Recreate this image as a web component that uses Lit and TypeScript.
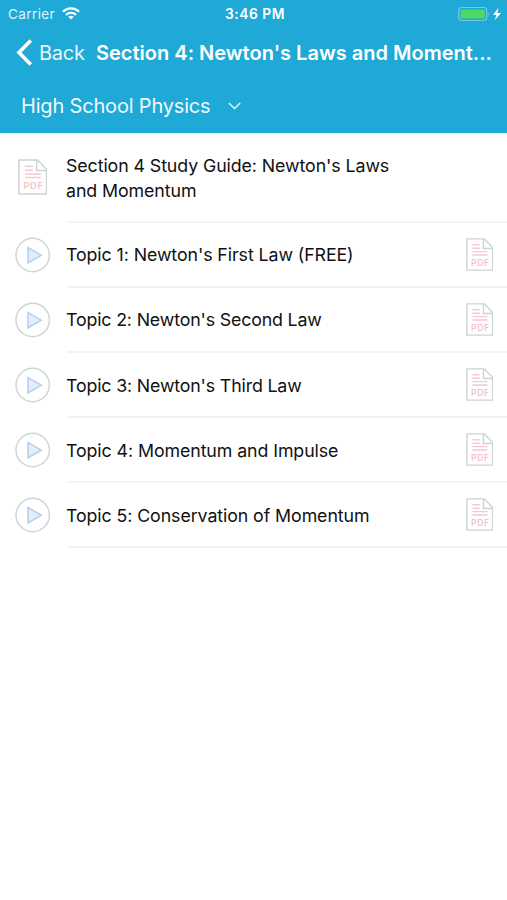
import { LitElement, html, css, svg, nothing } from "lit";
import { customElement, property } from "lit/decorators.js";

interface Lesson {
  title: string;
  kind: "guide" | "video";
  tight?: boolean;
}

const LESSONS: Lesson[] = [
  { title: "Section 4 Study Guide: Newton's Laws and Momentum", kind: "guide" },
  { title: "Topic 1: Newton's First Law (FREE)", kind: "video" },
  { title: "Topic 2: Newton's Second Law", kind: "video", tight: true },
  { title: "Topic 3: Newton's Third Law", kind: "video", tight: true },
  { title: "Topic 4: Momentum and Impulse", kind: "video" },
  { title: "Topic 5: Conservation of Momentum", kind: "video" },
];

@customElement("pdf-icon")
export class PdfIcon extends LitElement {
  @property({ type: Number }) width = 29.5;
  @property({ type: Number }) height = 36;

  static styles = css`
    :host { display: block; flex: none; }
    svg { display: block; }
    text { font: 600 9.500px Inter, sans-serif; }
  `;

  render() {
    return html`<svg width=${this.width} height=${this.height} viewBox="0 0 30 36" preserveAspectRatio="none" fill="none">
      ${svg`
        <path d="M1 1H20L29 10.500V35H1Z" stroke="#ccd3d2" stroke-width="1.500"/>
        <path d="M19 1.500V11.500H28.500" stroke="#ccd3d2" stroke-width="1.500"/>
        <path d="M7 7.300H15M7 11.200H15M7 14.900H23.500M7 18.600H23.500" stroke="#f5c9cd" stroke-width="1.500"/>
        <text x="5.500" y="30.200" fill="#f1c3c9" textLength="19.800">PDF</text>
      `}
    </svg>`;
  }
}

@customElement("lesson-row")
export class LessonRow extends LitElement {
  @property({ attribute: false }) lesson!: Lesson;

  static styles = css`
    :host { display: block; color: #111; }
    .row { display: flex; height: 65.150px; }
    .row.guide { height: 90px; }
    .lead { width: 66px; flex: none; display: flex; align-items: center; padding: 0 0 1px 15px; box-sizing: border-box; }
    .guide .lead { padding-left: 17.500px; padding-bottom: 1px; }
    .body {
      flex: 1; display: flex; align-items: center; justify-content: space-between;
      border-bottom: 2px solid #f3f3f3; margin-left: 1px; padding-right: 14px;
    }
    .title { font: 400 17.800px/25px Inter, sans-serif; letter-spacing: -0.090px; margin-left: -1px; padding-top: 1.500px; white-space: nowrap; }
    .title.tight { letter-spacing: -0.160px; }
    .guide .title { width: 340px; white-space: normal; padding-top: 3px; }
    svg { display: block; }
  `;

  render() {
    const guide = this.lesson.kind === "guide";
    return html`<div class="row ${this.lesson.kind}">
      <div class="lead">
        ${guide
          ? html`<pdf-icon></pdf-icon>`
          : html`<svg width="36" height="36" viewBox="0 0 36 36">
              <circle cx="17.700" cy="18" r="16.700" fill="#fff" stroke="#d0d5d7" stroke-width="1.500" />
              <path d="M13 10.500V26L26.300 18.200Z" fill="#e3eef9" stroke="#b3d0eb" stroke-width="1.500" />
            </svg>`}
      </div>
      <div class="body">
        <div class="title ${this.lesson.tight ? "tight" : ""}">${this.lesson.title}</div>
        ${guide ? nothing : html`<pdf-icon .width=${27.5} .height=${33}></pdf-icon>`}
      </div>
    </div>`;
  }
}

@customElement("app-root")
export class AppRoot extends LitElement {
  static styles = css`
    :host { display: block; height: 900px; background: #fff; font-family: Inter, sans-serif; overflow: hidden; }
    header { background: #1fa9d6; color: #fff; height: 132.500px; }
    svg { display: block; flex: none; }
    .status { height: 27px; display: grid; grid-template-columns: 1fr auto 1fr; align-items: center; padding: 0 5px 0 8px; }
    .carrier { display: flex; align-items: center; gap: 7px; color: #dff4fb; font-size: 13.500px; letter-spacing: 0.400px; }
    .time { font-weight: 600; font-size: 13.800px; letter-spacing: 0.550px; }
    .power { justify-self: end; }
    .nav { height: 51px; display: flex; align-items: center; padding-left: 16px; white-space: nowrap; }
    .back { font-size: 20px; letter-spacing: -0.250px; margin-left: 6px; color: #e6f6fc; width: 57px; }
    .heading { font-size: 20px; font-weight: 600; letter-spacing: 0.010px; }
    .course { height: 56px; display: flex; align-items: center; padding-left: 21px; gap: 18px; font-size: 20px; letter-spacing: -0.180px; color: #eef9fd; }
  `;

  render() {
    return html`
      <header>
        <div class="status">
          <div class="carrier">
            <span>Carrier</span>
            <svg width="18" height="13" viewBox="0 0 18 13" fill="none" stroke="#fff" stroke-width="2.200">
              <path d="M1 4.700C5.500.300 12.500.300 17 4.700M4 7.900C6.900 5.200 11.100 5.200 14 7.900" />
              <path d="M9 12.500L6.200 9.800Q9 7.700 11.800 9.800Z" fill="#fff" stroke="none" />
            </svg>
          </div>
          <div class="time">3:46 PM</div>
          <svg class="power" width="44" height="16" viewBox="0 0 44 16">
            <rect x=".7" y="1.500" width="28" height="13" rx="3" fill="none" stroke="#74c9e6" stroke-width="1.200" />
            <rect x="2.600" y="3.500" width="24.200" height="9" rx="1" fill="#4cd964" />
            <path d="M30.300 6Q32.200 8 30.300 10Z" fill="#74c9e6" />
            <path d="M40.500 1.800L35 8.900H38.300L36.800 14.300L43 6.900H39.300Z" fill="#fff" />
          </svg>
        </div>
        <div class="nav">
          <svg width="17" height="27" viewBox="0 0 17 27" fill="none" stroke="#fff" stroke-width="3.600">
            <path d="M14.800 1.500L3 13.500L14.800 25.500" />
          </svg>
          <span class="back">Back</span>
          <span class="heading">Section 4: Newton's Laws and Moment...</span>
        </div>
        <div class="course">
          <span>High School Physics</span>
          <svg width="13" height="8" viewBox="0 0 13 8" fill="none" stroke="#e6f6fc" stroke-width="1.400">
            <path d="M.8 1L6.500 6.600L12.200 1" />
          </svg>
        </div>
      </header>
      <main>${LESSONS.map((l) => html`<lesson-row .lesson=${l}></lesson-row>`)}</main>
    `;
  }
}
